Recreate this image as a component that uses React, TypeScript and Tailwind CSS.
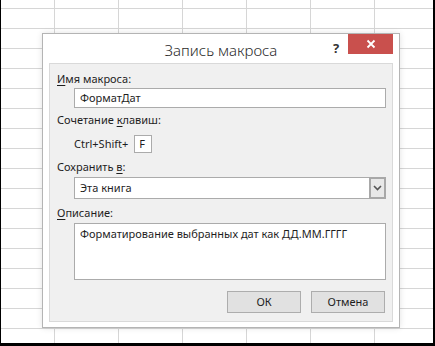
import React from "react";

const font = { fontFamily: '"Noto Sans", "Open Sans", sans-serif' };

function U({ children }: { children: React.ReactNode }) {
  return <span className="underline underline-offset-2">{children}</span>;
}

export default function App() {
  return (
    <div
      className="w-[435px] h-[346px] bg-white border-l border-r-2 border-b-[3px] border-black overflow-hidden bg-[linear-gradient(to_right,#d6d6d6_1px,transparent_1px),linear-gradient(to_bottom,#d6d6d6_1px,transparent_1px)] bg-[size:64px_20px] bg-[position:53px_8px] pl-[41px] pt-[33px] text-[#1e1e1e]"
      style={font}
    >
      <div className="w-[358px] h-[295px] bg-white border border-[#b4b4b4] shadow-[0_0_6px_rgba(0,0,0,0.12)] flex flex-col px-[6px] pb-[5px]">
        <div className="relative h-[29px] shrink-0 flex items-center justify-center">
          <span className="text-[15px] text-[#2b2b2b] font-light mt-[4px]">Запись макроса</span>
          <span className="absolute left-[284px] top-[5px] text-[13px] font-bold text-[#333]">?</span>
          <div className="absolute right-0 top-0 w-[45px] h-[20px] bg-[#c9504d] flex items-center justify-center">
            <svg width="10" height="10" viewBox="0 0 10 10">
              <path d="M1.5 1.5 L8.5 8.5 M8.5 1.5 L1.5 8.5" stroke="white" strokeWidth="1.8" />
            </svg>
          </div>
        </div>
        <div className="flex-1 bg-[#f0f0f0] border border-[#d9d9d9] flex flex-col pl-[7px] pr-[6px] text-[11px] leading-[16px]">
          <div className="mt-[7px]">
            <U>И</U>мя макроса:
          </div>
          <div className="mt-[1px] ml-[17px] h-[20px] bg-white border border-[#ababab] flex items-center pl-[5px]">
            ФорматДат
          </div>
          <div className="mt-[4px]">
            Сочетание <U>к</U>лавиш:
          </div>
          <div className="mt-[7px] ml-[17px] flex items-center">
            <span>Ctrl+Shift+</span>
            <div className="ml-[6px] w-[18px] h-[18px] bg-white border border-[#ababab] flex items-center pl-[4px]">F</div>
          </div>
          <div className="mt-[6px]">
            Сохранить <U>в</U>:
          </div>
          <div className="mt-[2px] ml-[17px] h-[22px] bg-white border border-[#ababab] flex items-center">
            <span className="flex-1 pl-[5px]">Эта книга</span>
            <div className="w-[17px] h-[22px] -mr-[1px] border-2 border-[#a8a8a8] bg-[#e8e8e8] flex items-center justify-center">
              <svg width="9" height="6" viewBox="0 0 9 6">
                <path d="M1 1 L4.5 4.5 L8 1" stroke="#555" strokeWidth="1.6" fill="none" />
              </svg>
            </div>
          </div>
          <div className="mt-[6px]">
            <U>О</U>писание:
          </div>
          <div className="mt-[2px] ml-[17px] h-[57px] bg-white border border-[#ababab] pl-[5px] pt-[2px]">
            Форматирование выбранных дат как ДД.ММ.ГГГГ
          </div>
          <div className="mt-[11px] flex justify-end gap-[10px] pr-[1px]">
            <div className="w-[74px] h-[22px] bg-[#e1e1e1] border border-[#adadad] flex items-center justify-center">
              ОК
            </div>
            <div className="w-[74px] h-[22px] bg-[#e1e1e1] border border-[#adadad] flex items-center justify-center">
              Отмена
            </div>
          </div>
        </div>
      </div>
    </div>
  );
}
